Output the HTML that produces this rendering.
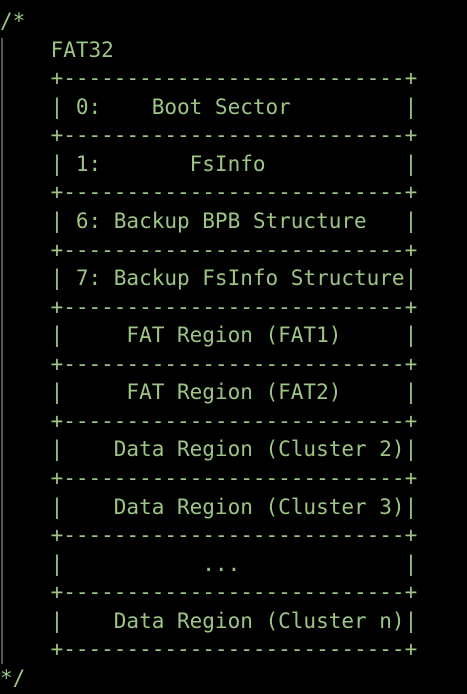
<!DOCTYPE html>
<html><head><style>
html,body{margin:0;padding:0;background:#000;width:467px;height:694px;overflow:hidden}
pre{margin:0;position:absolute;left:0;top:7px;font-family:"DejaVu Sans Mono","Liberation Mono",monospace;font-size:21px;line-height:28.56px;color:#9cc585;white-space:pre}
.bar{position:absolute;left:1px;top:38px;width:2px;height:626px;background:#555}
</style></head><body>
<div class="bar"></div>
<pre>/*
    FAT32
    +---------------------------+
    | 0:    Boot Sector         |
    +---------------------------+
    | 1:       FsInfo           |
    +---------------------------+
    | 6: Backup BPB Structure   |
    +---------------------------+
    | 7: Backup FsInfo Structure|
    +---------------------------+
    |     FAT Region (FAT1)     |
    +---------------------------+
    |     FAT Region (FAT2)     |
    +---------------------------+
    |    Data Region (Cluster 2)|
    +---------------------------+
    |    Data Region (Cluster 3)|
    +---------------------------+
    |           ...             |
    +---------------------------+
    |    Data Region (Cluster n)|
    +---------------------------+
*/</pre>
</body></html>
